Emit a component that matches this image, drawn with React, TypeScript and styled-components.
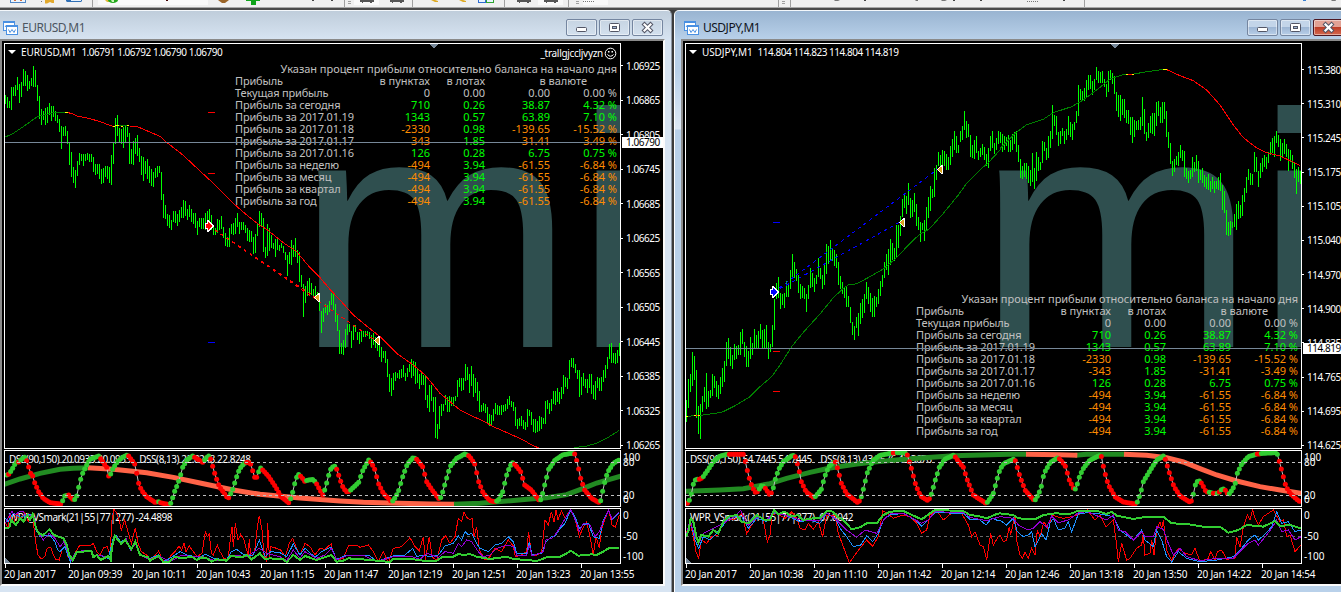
import React from "react";
import styled, { createGlobalStyle } from "styled-components";

// Drawing unit is a third of a pixel, so every pane maps 3 units to 1px
type Point = [number, number];
type Trend = "g" | "r";

const points = (text: string, dx = 0, dy = 0): Point[] =>
  text
    .trim()
    .split(/\s+/)
    .map((pair) => {
      const [x, y] = pair.split(",").map(Number);
      return [x + dx, y + dy] as Point;
    });

const toLine = (list: Point[]) => list.map((p) => p.join(",")).join(" ");

const parseBars = (text: string): Point[] =>
  text
    .trim()
    .split(/\s+/)
    .map((pair) => pair.split("-").map(Number) as Point);

const shiftBars = (list: Point[], dy: number): Point[] =>
  list.map(([high, low]) => [high + dy, low + dy]);

interface Dot {
  x: number;
  y: number;
  trend: Trend;
}

const parseDots = (text: string, dx = 0): Dot[] => {
  let trend: Trend = "g";
  return text
    .trim()
    .split(/\s+/)
    .map((item) => {
      const [x, y, t] = item.split(",");
      if (t) trend = t as Trend;
      return { x: Number(x) + dx, y: Number(y), trend };
    });
};

// one dot for every bar, between the given knots
const fillDots = (knots: Dot[]): Dot[] => {
  const dots: Dot[] = [];
  let k = 0;
  for (let x = knots[0].x; x <= 1860; x += 6) {
    while (k < knots.length - 2 && knots[k + 1].x <= x) k++;
    const a = knots[k];
    const b = knots[k + 1];
    const part = Math.min(1, (x - a.x) / (b.x - a.x));
    dots.push({ x, y: a.y + (b.y - a.y) * part, trend: part > 0.5 ? b.trend : a.trend });
  }
  return dots;
};

interface Stroke {
  color: string;
  line: Point[];
}

interface ChartData {
  symbol: string;
  quotes: string;
  expert?: string;
  scaleTop: number;
  tableTop: number;
  prices: string[];
  current: string;
  currentTop: number;
  priceLine: number;
  bars: Point[];
  average: Stroke[];
  dealColor: string;
  deals: [Point, Point][];
  stops: { x: number; y: number; color: string }[];
  dssLabel: string;
  dssSlow: Stroke[];
  dssFast: Dot[];
  wprLabel: string;
  wpr: Stroke[];
  times: string[];
}

const eurusd: ChartData = {
  symbol: "EURUSD,M1",
  quotes: "1.06791 1.06792 1.06790 1.06790",
  expert: "_trallgjccljvyzn",
  scaleTop: 16,
  tableTop: 19,
  prices: [
    "1.06925", "1.06865", "1.06805", "1.06745", "1.06685", "1.06625",
    "1.06565", "1.06505", "1.06445", "1.06385", "1.06325", "1.06265",
  ],
  current: "1.06790",
  currentTop: 94,
  priceLine: 426,
  bars: [
    ...parseBars(`
      285-312 290-322 303-325 262-330 262-288 255-288 230-270 252-308 245-290 207-258 212-258 225-272
      243-268 235-258 198-262 210-262 255-302 288-358 328-375 332-358 325-375 322-370 308-345 318-362
      318-350 332-362 345-368 357-395 378-447 380-408 378-408 392-432 430-495 457-532 502-550 510-563
      483-528 460-497 462-483 462-498 462-483 458-478 462-486 462-486 470-516 492-525 492-522 492-537
      508-552 504-548 498-532 498-537 500-548 465-554 430-492 354-432 345-407 385-430 386-430 380-443
      375-427 380-410 398-492 447-492 423-495 414-462 405-467 445-487 467-525 472-545 483-522 478-537
      498-548 506-556 515-560 504-534 498-530 498-518 515-598 582-655 615-657 642-678 645-684 660-690
      633-665 632-668 642-678 630-665 622-655 600-655 603-648 628-662 615-652 627-665 640-672 640-685
      662-704 654-680 653-685 654-688 640-690 632-690 627-680 645-690 675-704 684-704 657-700 660-690
      648-688 681-713 700-738 712-741 685-741 673-702 668-705 655-702 640-682 665-700 666-690 665-690
      675-698 685-725 690-725 693-725 710-760 702-760 670-708 633-680 640-682 655-756 740-774 672-768
      685-755 705-743 728-747 716-771 716-750 735-752 728-743 738-760 755-780 765-828 755-792 720-795
      735-771 714-771 750-790 755-845 825-860 852-951 858-910 842-886 833-878 850-885 867-890 857-888
      875-890 900-934 933-1000 925-967 912-938 915-945 902-935`),
    ...shiftBars(
      parseBars(`
      204-240 206-255 237-290 268-318 315-387 353-387 345-390 312-368 297-330 297-320 318-370 303-345
      300-322 320-345 320-357 318-352 318-335 318-336 318-332 320-340 330-370 323-360 335-368 345-378
      360-397 365-411 378-400 378-415 402-455 447-500 458-513 445-495 440-468 445-460 435-462 432-460
      420-455 444-468 428-455 417-442 402-458 408-452 410-477 432-475 447-492 437-480 450-480 452-525
      510-548 480-560 480-528 515-560 516-640 596-640 543-612 538-575 537-558 510-540 516-560 513-560
      516-542 516-542 513-528 465-516 460-487 458-497 460-497 417-468 427-465 447-503 423-482 447-516
      458-503 470-528 498-560 540-562 535-558 537-565 545-597 567-602 570-602 552-587 535-567 540-570
      543-570 540-570 540-562 537-558 522-552 513-540 528-545 532-560 545-602 582-612 580-605 573-602
      585-612 590-615 552-607 555-572 560-600 582-622 582-623 588-620 573-617 577-612 580-598 528-598
      524-550 535-567 522-558 497-537 497-540 488-530 500-535 485-520 450-507 455-485 460-492 405-462
      400-428 400-430 418-445 435-462 435-516 455-508 445-485 463-490 463-506 447-490 447-507 480-522
      468-524 455-487 460-500 455-498 435-470 420-458 395-430 357-402 354-413 383-413 385-417 375-413
      354-392`),
      675
    ),
  ],
  average: [
    { color: "#008000", line: points("16,411 40,400 70,380 112,350 160,338 196,338") },
    { color: "#ffff00", line: points("194,338 203,338") },
    { color: "#ff0000", line: points("203,338 214,340 232,348 270,356 300,365 338,379") },
    { color: "#ffff00", line: points("338,379 346,378 358,377") },
    { color: "#008000", line: points("358,377 388,377") },
    { color: "#ffff00", line: points("363,378 370,378") },
    { color: "#ffff00", line: points("381,377 388,377") },
    {
      color: "#ff0000",
      line: [
        ...points(
          "388,378 410,379 440,392 482,410 500,427 550,466 600,513 640,550 700,610 740,645 775,673 800,688 850,728 890,755 930,803 960,833"
        ),
        ...points(
          "0,193 40,236 70,270 100,295 150,335 200,385 250,420 285,450 310,480 330,505 360,530 390,555 430,575 460,588 490,605 540,627 580,645 605,660 627,669",
          990,
          675
        ),
      ],
    },
    { color: "#008000", line: points("732,668 770,663 800,655 830,640 868,616", 990, 675) },
  ],
  dealColor: "#ff0000",
  deals: [
    [[627, 678], [945, 891]],
    [[627, 678], [1125, 1020]],
  ],
  stops: [
    { x: 624, y: 336, color: "#ff0000" },
    { x: 624, y: 519, color: "#ff0000" },
    { x: 624, y: 1026, color: "#0000ff" },
  ],
  dssLabel: "DSS(90,150) 20.0933 20.0933    DSS(8,13) 22.8248 22.8248",
  dssSlow: [
    { color: "#228b22", line: points("10,134 60,117 120,100 180,88 220,85 268,83") },
    {
      color: "#ff6347",
      line: points(
        "264,83 340,88 440,98 520,112 600,129 700,150 780,163 900,174 1020,183 1090,187 1170,189 1290,192 1364,193"
      ),
    },
    {
      color: "#228b22",
      line: points("372,193 450,190 520,184 600,177 650,173 710,164 760,145 800,129 875,108", 990),
    },
  ],
  dssFast: [
    ...parseDots(`
      20,105,g 26,103,r 34,92,g 48,66 57,66,r 64,58,g 74,52,g 80,62,r 92,100 98,108 104,128 116,155 130,175
      150,188 182,192,r 188,182,g 194,168 206,165,r 220,180 226,178,g 232,163 236,142 242,118 248,100
      258,78 270,58 296,48,g 302,56,r 320,82 326,108 332,102,g 338,88 350,68 364,54 380,46 386,48,r 404,72
      410,100 416,130 424,150 440,170 466,188 474,184,g 480,188,r 508,194 514,188,g 522,158 532,135
      540,112 548,82 560,60 578,48 584,52,r 610,68 616,56,g 626,48 634,60,r 640,88 650,118 658,140
      684,176,r 688,170,g 698,148 710,110 718,88 730,72 742,66,r 752,72 764,112 770,112 778,90,g 782,84
      790,92,r 805,108 825,138 845,172 866,188 872,176,g 880,150 886,122 894,102 904,110,r 914,124
      924,120,g 940,118 950,132,r 968,165 974,150,g 982,122 990,90`),
    ...parseDots(
      `
      12,76,g 20,88,r 32,124 40,145 52,157 60,152,g 86,127 98,92 116,60 124,68,r 134,88 146,132 160,160
      185,185 190,182,g 205,155 218,110 232,72 250,52 260,58,r 278,80 290,125 310,155 328,178 334,170,g
      346,128 360,80 380,55 404,42 418,48,r 434,72 446,125 460,160 480,182 495,185 504,182,g 518,155
      530,105 540,78 548,68 556,74,r 572,95 584,135 604,150 628,182 634,178,g 644,135 656,88 675,60
      700,44 725,40 734,42,r 742,68 752,115 764,150 785,175 808,188 812,182,g 822,135 832,98 850,70 870,58`,
      990
    ),
  ],
  wprLabel: "WPR_VSmark(21|55|77|277) -24.4898",
  wpr: [
    {
      color: "#ff0000",
      line: [
        ...points(`
          16,250 24,262 30,225 40,250 50,222 60,240 75,218 85,245 98,225 106,300 114,345 124,357 134,350
          142,325 152,322 158,340 166,357 178,360 186,330 196,318 204,350 214,362 226,338 240,315 270,318
          280,310 290,335 300,345 312,322 322,320 330,345 336,240 342,208 350,220 356,235 364,270 374,240
          384,275 394,310 406,263 414,310 424,335 440,345 450,358 462,350 476,333 488,362 500,365 510,350
          525,335 537,318 545,330 552,310 558,335 568,318 580,335 592,350 606,340 616,275 622,290 628,282
          634,340 640,345 652,315 660,335 672,355 684,360 692,290 696,260 700,320 706,250 714,300 722,283
          732,300 744,345 748,297 752,350 764,335 772,260 778,227 786,270 792,345 800,365 803,250 808,350
          812,320 830,325 842,330 856,350 868,310 878,295 888,320 900,345 915,310 930,320 945,345 960,325
          975,328 995,310`),
        ...points(
          `4,320 20,360 40,355 55,318 80,315 90,322 115,315 130,335 145,365 160,335 175,368 190,325 215,320
          240,293 255,320 268,332 280,290 286,360 298,290 306,350 320,362 335,300 347,288 360,310 375,290
          385,235 395,245 402,215 410,232 420,240 426,235 432,290 440,260 448,330 466,360 480,350 495,325
          515,335 535,300 550,318 556,350 575,345 590,335 596,275 604,345 620,345 635,338 645,240 655,255
          664,215 672,245 678,210 684,240 694,213 705,235 722,208 735,235 748,290 758,265 770,245 780,290
          790,345 798,290 808,325 814,270 824,240 836,208 846,255 856,262 868,225`,
          990
        ),
      ],
    },
    {
      color: "#1e90ff",
      line: [
        ...points(`
          16,235 24,245 40,220 60,232 80,222 100,225 108,270 120,290 134,285 150,285 165,305 172,328
          180,335 195,320 205,350 212,366 228,335 270,332 285,348 300,345 325,355 338,300 348,285 362,305
          378,298 392,330 408,308 420,345 450,355 475,345 490,365 515,352 540,335 560,345 600,352 616,342
          640,355 680,360 694,335 710,328 740,350 760,345 770,320 778,300 786,325 796,350 812,335 840,338
          860,350 880,312 900,345 915,325 945,352 965,335 985,325`),
        ...points(
          `4,322 20,358 50,345 120,348 140,365 190,348 225,345 248,325 260,350 280,345 300,350 325,345
          345,318 370,310 385,288 395,300 405,275 415,285 425,280 440,310 450,325 475,335 495,315 515,310
          535,290 550,305 560,340 590,340 598,305 606,345 635,340 648,305 665,290 675,288 690,265 705,250
          722,210 735,230 748,265 760,255 775,250 790,290 808,295 820,240 836,210 846,240 868,218`,
          990
        ),
      ],
    },
    {
      color: "#9400d3",
      line: [
        ...points(`
          16,250 26,230 36,215 45,225 58,215 70,215 80,230 100,222 112,275 130,300 148,280 165,295 180,320
          192,305 206,345 214,360 228,335 270,330 280,350 295,345 330,352 345,285 365,310 378,295 392,330
          408,308 420,345 450,360 480,350 510,365 545,345 575,350 610,350 640,360 680,362 694,345 740,350
          778,325 800,340 840,350 860,362 880,330 900,355 915,335 950,355 975,345`),
        ...points(
          `4,325 20,360 55,345 100,345 140,365 190,350 240,348 270,358 290,340 325,352 345,335 370,340
          385,310 395,320 410,300 425,305 445,335 460,350 480,345 500,325 530,315 550,320 560,345 590,345
          598,315 606,348 640,335 648,300 665,295 675,285 690,262 722,208 740,250 748,275 760,250 780,255
          795,290 808,275 820,245 836,210 846,238 868,215`,
          990
        ),
      ],
    },
    {
      color: "#32cd32",
      line: [
        ...points(`
          16,265 28,262 34,240 48,255 60,235 70,245 82,225 90,240 98,222 108,265 118,282 130,285 148,268
          162,285 190,295 200,315 208,345 218,360 230,337 274,332 280,352 290,345 302,360 325,348 332,360
          336,320 345,287 354,300 364,312 376,300 394,328 406,305 420,345 444,352 450,362 476,348 490,366
          508,365 525,350 545,355 575,350 590,360 605,352 620,355 635,365 650,358 680,362 694,348 725,352
          740,345 755,358 780,340 795,358 810,355 850,358 860,366 880,345 900,360 915,348 950,360`),
        ...points(
          `4,345 20,365 40,362 55,355 120,360 180,366 190,357 250,358 280,362 320,362 335,352 370,350
          385,342 400,345 420,342 440,350 480,357 530,350 550,357 590,360 620,363 650,352 690,350 710,340
          722,332 745,347 785,343 800,345 820,335 836,325 868,323`,
          990
        ),
      ],
    },
  ],
  times: [
    "20 Jan 2017", "20 Jan 09:39", "20 Jan 10:11", "20 Jan 10:43", "20 Jan 11:15",
    "20 Jan 11:47", "20 Jan 12:19", "20 Jan 12:51", "20 Jan 13:23", "20 Jan 13:55",
  ],
};

const usdjpy: ChartData = {
  symbol: "USDJPY,M1",
  quotes: "114.804 114.823 114.804 114.819",
  scaleTop: 20,
  tableTop: 249,
  prices: [
    "115.380", "115.310", "115.245", "115.175", "115.105", "115.040",
    "114.970", "114.900", "114.835", "114.765", "114.695", "114.625",
  ],
  current: "114.819",
  currentTop: 300,
  priceLine: 1044,
  bars: [
    ...shiftBars(
      parseBars(`
      525-590 462-550 447-500 381-483 393-465 435-578 542-627 537-641 513-560 486-532 444-551 497-545
      495-518 447-513 453-490 468-515 480-521 456-506 429-486 408-470 351-422 339-402 366-422 390-432
      357-405 363-402 360-390 321-390 312-357 351-395 363-426 378-425 336-402 354-390 312-368 330-368
      318-368 297-342 315-368 312-370 300-371 351-402 357-380 300-366 222-315 174-222 156-218 204-252
      207-240 204-248 168-216 174-216 135-192 87-158 111-160 132-168 150-204 177-222 183-218 189-222
      207-261 180-222 129-189 144-186 159-200 150-176 99-156 129-162 150-192 117-180 57-148 63-116
      45-104 69-108 75-122 87-130 111-180 153-192 171-207 186-218 186-246 213-246 246-294 291-330
      303-345 276-308 264-333 234-296 222-278 207-264 171-222 186-236 204-260 219-276 213-276 216-246
      192-236 168-212 150-185 111-158 87-136 72-150 42-120 54-104 69-108`),
      675
    ),
    ...parseBars(`
      675-771 675-745 648-708 597-650 582-624 588-642 549-615 594-655 600-650 579-636 612-678 651-690
      666-725 669-690 660-722 621-690 591-655 558-632 567-594 504-590 495-540 456-498 465-510 450-500
      453-498 462-510 471-510 438-495 417-470 393-450 408-459 435-458 393-426 378-420 333-390 363-413
      372-410 405-471 435-473 420-476 408-458 453-480 444-471 432-465 441-480 462-498 444-503 408-452
      393-444 429-462 414-450 393-432 396-430 402-455 408-450 411-438 405-455 420-456 402-450 396-432
      393-457 435-486 477-533 498-536 489-530 489-536 498-548 510-557 459-545 504-567 456-542 471-512
      486-510 423-488 426-454 444-480 408-473 393-444 315-416 345-378 348-405 396-437 393-432 384-407
      393-432 387-420 348-405 366-410 372-420 366-390 333-370 255-348 267-300 273-300 264-303 240-290
      225-270 225-267 243-285 237-270 201-240 213-250 216-250 213-250 237-262 252-291 212-276 210-240
      219-252 228-282 276-333 285-350 285-363 297-345 297-353 330-370 330-372 351-405 351-430 360-412
      363-390 360-390 351-390 291-378 327-402 396-423 369-413 348-400 339-402 339-408 306-378 303-348
      321-370 306-368 306-356 333-412 396-444 429-493 483-528 477-517 468-495 456-498 435-473 450-483
      453-530 504-538 513-549 510-538 471-531 486-516 465-512 483-549 510-540 504-550 525-560 531-568
      522-570 543-576 531-568 543-578 543-568 531-570 519-572 555-630 573-640 630-705 666-707 662-705
      665-684 642-680 612-690 603-657 615-655 585-648 564-606 531-578 507-540 519-555 522-555 456-516
      471-516 513-560 489-535 474-516 465-500 471-508 456-490 426-465 414-460 408-470 393-430 405-440
      417-483 429-471 417-462 432-470 447-512 450-486 465-508 490-534 507-582 501-545 513-552`),
  ],
  average: [
    {
      color: "#008000",
      line: [
        ...points(
          "47,576 75,571 91,571 155,562 190,545 240,515 270,485 305,455 330,420 365,365 400,322 450,267 490,218 520,190 535,180 560,176 600,155 640,132 680,98 720,55 750,27",
          -33,
          675
        ),
        ...points("778,687 820,640 865,585 890,550 935,505 955,488 990,450", -33),
        ...points(
          "0,445 45,400 80,374 130,358 160,338 215,320 250,300 300,262 330,237 370,224 402,222 430,217 490,208",
          957
        ),
      ],
    },
    { color: "#ffff00", line: points("47,576 53,574", -33, 675) },
    { color: "#ffff00", line: points("73,571 91,571", -33, 675) },
    { color: "#ff0000", line: points("79,571 85,571", -33, 675) },
    { color: "#ffff00", line: points("378,223 403,223", 957) },
    { color: "#ff0000", line: points("384,223 396,223", 957) },
    { color: "#ffff00", line: points("490,208 500,208", 957) },
    {
      color: "#ff0000",
      line: points(
        "500,209 540,227 580,242 620,270 660,315 700,375 730,413 770,444 800,458 840,468 870,482 900,497",
        957
      ),
    },
  ],
  dealColor: "#0000ff",
  deals: [
    [[279, 876], [657, 666]],
    [[279, 876], [771, 507]],
  ],
  stops: [
    { x: 276, y: 666, color: "#0000ff" },
    { x: 276, y: 1053, color: "#ff0000" },
    { x: 276, y: 1173, color: "#ff0000" },
  ],
  dssLabel: "DSS(90,150) 54.7445 54.7445    DSS(8,13) 43.3676 43.3676",
  dssSlow: [
    {
      color: "#228b22",
      line: [
        ...points(
          "43,154 150,150 220,146 300,131 350,115 420,97 480,84 560,72 620,65 720,56 850,47 1018,43",
          -33
        ),
        ...points("80,43", 957),
      ],
    },
    { color: "#228b22", line: points("225,46 260,43 376,43", 957) },
    { color: "#ff6347", line: points("78,43 180,44 232,46", 957) },
    {
      color: "#ff6347",
      line: points("372,43 440,46 500,53 550,66 600,86 650,105 710,123 780,140 840,150 910,161", 957),
    },
  ],
  dssFast: [
    ...parseDots(
      `
      52,190,r 60,178,g 66,155 72,122 80,118 90,118,r 98,112,g 112,92 130,65 150,48 170,43,g 180,43,r
      222,43,r 228,75,r 236,108 246,140 258,160,r 266,150,g 276,135 286,145,r 300,166 308,152,g 316,118
      326,88 340,65 368,45,g 376,50,r 386,85 394,125 408,155 432,173,r 438,168,g 454,148 464,110 476,80
      492,66,g 497,66,r 504,90 514,130 530,162 564,188,r 572,178,g 582,140 592,98 608,62 630,46 662,40,g
      670,39,r 682,38,g 704,38,g 712,45,r 724,85 738,138 752,168 774,182,r 782,170,g 796,120 808,82
      824,58 852,45,g 858,54,r 880,82 892,120 910,165 948,190,r 954,185,g 970,160 982,115 990,88`,
      -33
    ),
    ...parseDots(
      `
      12,70,g 40,58,g 46,62,r 60,110 75,150 103,182,r 108,177,g 122,148 132,100 150,68 172,54,g 178,56,r
      195,75 208,120 222,148,r 228,146,g 240,105 252,82 270,60 300,46,g 305,50,r 312,90 325,135 345,170
      370,186 405,192,r 412,186,g 422,158 430,125 450,92 470,60 490,48,g 496,58,r 508,98 522,140 540,168
      572,188,r 578,172,g 588,126 600,122,g 606,132,r 618,155 630,157,g 642,160,r 652,160,g 660,155,r
      667,145,g 678,152,r 684,164,r 690,160,g 705,135 712,100 725,72 745,50 768,43,g 772,42,r 778,42,r
      786,40,g 830,38,g 834,48,r 846,95 858,140 872,162 905,190`,
      957
    ),
  ],
  wprLabel: "WPR_VSmark(21|55|77|277) -67.8042",
  wpr: [
    {
      color: "#ff0000",
      line: [
        ...points(
          `49,280 60,245 70,290 78,335 86,355 94,300 110,310 125,290 145,285 165,235 185,240 200,235 215,220
          230,282 245,255 260,235 280,240 292,305 300,285 306,225 320,220 345,235 365,215 380,235 390,265
          405,270 415,250 430,268 445,245 458,290 470,225 495,225 505,280 520,320 538,368 555,345 570,325
          590,300 608,318 625,290 638,212 650,218 670,235 700,225 720,230 740,250 755,280 770,270 780,225
          800,212 820,240 850,215 875,220 895,255 905,290 915,275 930,315 940,320 950,360 962,280 970,315
          985,290`,
          -33
        ),
        ...points(
          `0,285 10,305 20,300 28,260 32,285 45,225 50,300 60,345 68,355 75,335 85,355 95,325 105,345 112,270
          120,290 132,245 145,270 155,225 170,230 190,235 215,230 240,222 262,210 285,240 300,225 318,260
          340,240 348,300 355,365 365,310 380,360 390,355 400,340 410,325 425,315 430,280 434,345 450,340
          455,300 462,345 470,270 480,245 485,265 490,240 500,330 515,360 535,325 555,340 575,345 585,325
          600,365 625,355 632,335 645,360 652,335 665,330 680,358 705,355 710,290 720,320 730,260 742,225
          750,240 758,208 765,235 775,255 790,230 820,210 840,245 850,240 860,290 870,285 885,335 903,315`,
          957
        ),
      ],
    },
    {
      color: "#1e90ff",
      line: [
        ...points(
          `49,290 60,240 75,300 86,325 100,290 120,300 140,280 160,255 180,230 215,230 235,265 260,235
          290,245 310,220 345,225 390,245 420,240 450,250 470,220 495,235 510,265 530,290 550,320 572,315
          590,288 608,305 625,280 640,240 660,225 700,220 735,240 755,258 775,240 795,218 880,220 900,238
          930,240 948,255 965,235 985,242`,
          -33
        ),
        ...points(
          `0,240 20,255 40,235 52,275 70,290 85,285 95,275 105,320 115,300 125,280 138,300 150,250 160,235
          175,270 195,265 205,245 215,275 235,222 262,218 300,222 340,230 360,270 400,300 425,270 435,300
          460,320 470,270 485,300 500,350 515,366 535,335 560,355 600,365 650,360 700,350 725,325 745,300
          765,285 775,300 800,278 815,260 830,215 845,250 865,245 885,275 903,270`,
          957
        ),
      ],
    },
    {
      color: "#9400d3",
      line: [
        ...points(
          `49,285 60,240 75,290 86,310 100,280 130,265 160,250 190,232 212,212 235,255 260,230 290,240
          310,218 345,225 390,240 450,240 470,218 500,240 530,270 560,292 585,270 620,280 640,240 660,222
          700,220 755,250 775,240 795,215 880,218 900,232 950,242`,
          -33
        ),
        ...points(
          `0,230 40,235 55,255 85,270 100,265 120,245 140,262 155,228 175,248 205,240 235,218 262,215
          320,240 340,225 355,270 375,275 400,300 425,275 435,290 460,290 470,260 490,268 505,310 520,345
          540,325 560,350 600,362 650,355 700,355 725,330 745,310 765,300 775,315 800,285 815,265 830,240
          845,275 865,270 885,300 903,290`,
          957
        ),
      ],
    },
    {
      color: "#32cd32",
      line: [
        ...points(
          `49,290 56,270 62,235 70,245 78,285 85,308 94,285 115,290 130,270 145,280 160,245 175,230 200,225
          215,245 235,250 260,225 285,240 300,240 312,210 325,222 345,215 365,230 385,225 400,240 430,235
          450,235 470,213 490,215 500,228 520,240 545,268 570,262 590,250 620,250 640,225 660,215 700,213
          720,222 755,238 780,220 795,210 880,213 900,225 925,228 950,235 980,222`,
          -33
        ),
        ...points(
          `0,220 40,225 55,235 105,238 130,225 165,220 210,222 235,212 290,212 320,222 335,215 350,227
          400,237 440,230 490,230 515,250 560,252 610,260 660,260 685,278 715,270 740,255 790,260 825,243
          840,258 870,255 903,265`,
          957
        ),
      ],
    },
  ],
  times: [
    "20 Jan 2017", "20 Jan 10:38", "20 Jan 11:10", "20 Jan 11:42", "20 Jan 12:14",
    "20 Jan 12:46", "20 Jan 13:18", "20 Jan 13:50", "20 Jan 14:22", "20 Jan 14:54",
  ],
};

const profitRows = [
  ["Текущая прибыль", "0", "0.00", "0.00", "0.00 %"],
  ["Прибыль за сегодня", "710", "0.26", "38.87", "4.32 %"],
  ["Прибыль за 2017.01.19", "1343", "0.57", "63.89", "7.10 %"],
  ["Прибыль за 2017.01.18", "-2330", "0.98", "-139.65", "-15.52 %"],
  ["Прибыль за 2017.01.17", "-343", "1.85", "-31.41", "-3.49 %"],
  ["Прибыль за 2017.01.16", "126", "0.28", "6.75", "0.75 %"],
  ["Прибыль за неделю", "-494", "3.94", "-61.55", "-6.84 %"],
  ["Прибыль за месяц", "-494", "3.94", "-61.55", "-6.84 %"],
  ["Прибыль за квартал", "-494", "3.94", "-61.55", "-6.84 %"],
  ["Прибыль за год", "-494", "3.94", "-61.55", "-6.84 %"],
];

const valueColor = (value: string) => {
  const amount = parseFloat(value);
  if (amount === 0) return "#c0c0c0";
  return amount > 0 ? "#00ff00" : "#ff8c00";
};

type ToolKind =
  | "sep" | "grip" | "doc" | "star" | "panel" | "ball" | "brown" | "plus" | "dot"
  | "chart" | "gold" | "tiles" | "mark" | "dots" | "blue";

// x, width, kind, pressed
const tools: [number, number, ToolKind, boolean?][] = [
  [10, 16, "doc"], [41, 1, "dots"], [45, 9, "star"], [66, 16, "panel"], [92, 1, "sep"],
  [98, 110, "ball", true], [218, 11, "brown"], [246, 14, "plus"], [312, 2, "dot"], [331, 2, "dot"],
  [344, 1, "sep"], [348, 3, "grip"], [354, 25, "chart", true], [384, 25, "chart"], [412, 1, "sep"],
  [431, 7, "gold"], [459, 7, "gold"], [478, 16, "tiles"], [504, 1, "sep"], [511, 25, "chart"],
  [538, 25, "chart", true], [568, 1, "sep"], [576, 3, "grip"], [583, 25, "dots", true], [778, 1, "sep"],
  [782, 3, "grip"], [790, 1, "sep"], [834, 7, "mark"], [864, 2, "dot"], [915, 3, "mark"],
  [941, 7, "mark"], [953, 3, "dot"], [980, 3, "dot"], [1027, 11, "dots"], [1063, 3, "dot"],
  [1084, 1, "sep"], [1303, 3, "blue"], [1331, 5, "mark"],
];

const ToolGlyph = ({ kind }: { kind: ToolKind }) => {
  switch (kind) {
    case "sep":
      return <path d="M0 0h1v7h-1z" fill="#a0a0a0" />;
    case "grip":
      return <path d="M0 1h3v1h-3zM0 3h3v1h-3z" fill="#a0a0a0" />;
    case "doc":
      return (
        <>
          <path d="M0 0h16v3h-16z" fill="#4f86c6" />
          <path d="M1 0h14v2h-14z" fill="#eef5fc" />
          <path d="M4 0h2v1h-2zM10 0h2v1h-2z" fill="#d07040" />
        </>
      );
    case "star":
      return <path d="M0 0h9v3h-2l-2 -1l-3 1.500h-2z" fill="#e2a92d" />;
    case "panel":
      return (
        <>
          <path d="M0 0h16v1l-1 1h-14l-1 -1z" fill="#2f6fb5" />
          <path d="M5 0h10v1h-10z" fill="#e7f1fb" />
        </>
      );
    case "ball":
      return (
        <>
          <path d="M7 0h5v2h-3z" fill="#e4b83a" />
          <path d="M10 0h10a5 3 0 0 1 -10 0z" fill="#22a81c" />
          <path d="M13 0h3v2h-2z" fill="#c8f3b5" />
          <path d="M68 0h2v1h-2z" fill="#400" />
        </>
      );
    case "brown":
      return <path d="M0 0h11l-4 3h-3z" fill="#9a6428" />;
    case "plus":
      return <path d="M0 0h14v1h-4v4h-5v-4h-5z" fill="#0fa31a" />;
    case "dot":
      return <path d="M0 0h2v1h-2z" fill="#444" />;
    case "chart":
      return <path d="M6 0h14v2h-2v1h-2v-1h-7v1h-1v-1h-2z" fill="#555" />;
    case "gold":
      return <path d="M0 0h4l3 1v1h-3z" fill="#dfaa22" />;
    case "tiles":
      return (
        <>
          <path d="M0 0h8v3h-8z" fill="#2d6bd0" />
          <path d="M8 0h8v3h-8z" fill="#2fa52f" />
          <path d="M1 0h6v2h-6zM9 0h6v2h-6z" fill="#e9f4ff" />
        </>
      );
    case "mark":
      return <path d="M0 0h6l-2 1h-3z" fill="#777" />;
    case "dots":
      return <path d="M0 1h1v1h-1zM2 1h1v1h-1zM4 1h1v1h-1zM6 1h1v1h-1zM8 1h1v1h-1zM10 1h1v1h-1z" fill="#777" />;
    case "blue":
      return <path d="M0 0h3v1h-3z" fill="#3a7fd0" />;
  }
};

const Toolbar = () => (
  <ToolRow>
    {tools.map(([x, width, kind, pressed], i) => {
      const before = i ? tools[i - 1][0] + tools[i - 1][1] : 0;
      return (
        <Tool key={x} $gap={x - before} $width={width} $pressed={pressed}>
          <svg width={width} height="7">
            <ToolGlyph kind={kind} />
          </svg>
        </Tool>
      );
    })}
  </ToolRow>
);

const ProfitTable = ({ top }: { top: number }) => (
  <Profit $top={top}>
    <ProfitTitle>Указан процент прибыли относительно баланса на начало дня</ProfitTitle>
    <ProfitName>Прибыль</ProfitName>
    <ProfitCell>в пунктах</ProfitCell>
    <ProfitCell>в лотах</ProfitCell>
    <ProfitCurrency>в валюте</ProfitCurrency>
    {profitRows.map(([name, ...values]) => (
      <React.Fragment key={name}>
        <ProfitName>{name}</ProfitName>
        {values.map((value, i) => (
          <ProfitCell key={i} $color={valueColor(value)}>
            {value}
          </ProfitCell>
        ))}
      </React.Fragment>
    ))}
  </Profit>
);

const Strokes = ({ list, width }: { list: Stroke[]; width: (color: string) => number }) => (
  <>
    {list.map(({ color, line }, i) => (
      <polyline key={i} points={toLine(line)} fill="none" stroke={color} strokeWidth={width(color)} />
    ))}
  </>
);

const PriceDrawing = ({ data }: { data: ChartData }) => (
  <Drawing viewBox="15 132 1845 1212" shapeRendering="crispEdges">
    {data.bars.map(([high, low], i) => (
      <rect
        key={i}
        x={15 + i * 6}
        y={Math.round(high / 3) * 3}
        width={3}
        height={Math.round((low - high) / 3) * 3}
        fill="#00ff00"
      />
    ))}
    <Strokes list={data.average} width={() => 3} />
    {data.stops.map((stop) => (
      <rect key={stop.y} x={stop.x} y={stop.y} width={21} height={3} fill={stop.color} />
    ))}
    {data.deals.map(([from, to], i) => (
      <line
        key={i}
        x1={from[0]}
        y1={from[1]}
        x2={to[0]}
        y2={to[1]}
        stroke={data.dealColor}
        strokeWidth={3}
        strokeDasharray="10 11"
      />
    ))}
    {data.deals.map(([, [x, y]]) => (
      <g key={x}>
        <path d={`M${x - 3} ${y + 1.5}l13 -13.500h5v27h-5z`} fill="#fff" />
        <path d={`M${x} ${y + 1.5}l9 -9h3v18h-3z`} fill="#daa520" />
      </g>
    ))}
    <g transform={`translate(${data.deals[0][0][0]} ${data.deals[0][0][1]})`}>
      <path d="M-12 -9h6v-8h6l14 14v6l-14 14h-6v-8h-6z" fill="#fff" />
      <path d="M-8 -6h6v-6l12 12l-12 12v-6h-6z" fill={data.dealColor} />
    </g>
    <rect x={15} y={data.priceLine} width={1845} height={3} fill="#778899" />
    <path d="M1287 132h27l-13 14z" fill="#778899" />
  </Drawing>
);

const DssDrawing = ({ data }: { data: ChartData }) => {
  const dots = fillDots(data.dssFast);
  return (
    <Drawing viewBox="15 33 1845 165">
      <Strokes list={data.dssSlow} width={() => 15} />
      <polyline points={dots.map((d) => `${d.x},${d.y}`).join(" ")} fill="none" stroke="#c0c0c0" strokeWidth={3} />
      {dots.map((d) => (
        <circle key={d.x} cx={d.x} cy={d.y} r={7.5} fill={d.trend === "g" ? "#32cd32" : "#ff0000"} />
      ))}
      <path d="M15 67.500H1860M15 166.500H1860" stroke="#c0c0c0" strokeWidth={3} strokeDasharray="9 9" />
    </Drawing>
  );
};

const WprDrawing = ({ data }: { data: ChartData }) => (
  <Drawing viewBox="15 207 1845 162" shapeRendering="crispEdges">
    <path d="M15 289.500H1860" stroke="#696969" strokeWidth={3} strokeDasharray="9 9" />
    <Strokes list={data.wpr} width={(color) => (color === "#32cd32" ? 6 : 3)} />
    <path d="M15 352l17 17h-17z" fill="#778899" />
  </Drawing>
);

const Chart = ({ data }: { data: ChartData }) => (
  <Client>
    <Pane>
      <Drawing viewBox="15 132 1845 1212">
        <Watermark x={888} y={1041}>
          mi
        </Watermark>
      </Drawing>
      <ProfitTable top={data.tableTop} />
      <PriceDrawing data={data} />
      <PaneHeader>
        <svg width="8" height="4">
          <path d="M0 0h8l-4 4z" fill="#fff" />
        </svg>
        <span>{data.symbol}</span>
        <Quotes>{data.quotes}</Quotes>
      </PaneHeader>
      {data.expert && (
        <Expert>
          {data.expert}
          <svg width="13" height="13" viewBox="0 0 13 13" fill="none" stroke="#fff">
            <circle cx="6.5" cy="6.5" r="5.3" />
            <path d="M3.500 7.500q3 3.500 6 0" />
            <path d="M4 4h1.500v1.500h-1.500zM7.500 4h1.500v1.500h-1.500z" fill="#fff" stroke="none" />
          </svg>
        </Expert>
      )}
    </Pane>
    <PriceScale $top={data.scaleTop}>
      {data.prices.map((price) => (
        <Price key={price}>{price}</Price>
      ))}
      <CurrentPrice $top={data.currentTop}>{data.current}</CurrentPrice>
    </PriceScale>
    <Pane>
      <PaneLabel>{data.dssLabel}</PaneLabel>
      <DssDrawing data={data} />
    </Pane>
    <LevelScale>
      <Level $top={1}>100</Level>
      <Level $top={6}>80</Level>
      <Level $top={39}>20</Level>
      <Level $top={43}>0</Level>
    </LevelScale>
    <Pane>
      <PaneLabel>{data.wprLabel}</PaneLabel>
      <WprDrawing data={data} />
    </Pane>
    <LevelScale>
      <Level $top={1}>0</Level>
      <Level $top={22}>-50</Level>
      <Level $top={42}>-100</Level>
    </LevelScale>
    <TimeScale>
      {data.times.map((time) => (
        <Time key={time}>{time}</Time>
      ))}
    </TimeScale>
  </Client>
);

const ChartWindow = ({ data, active }: { data: ChartData; active?: boolean }) => (
  <Window $active={active}>
    <TitleBar $active={active}>
      <svg width="15" height="14" viewBox="0 0 15 14" fill="#fff" stroke="#4a90e2">
        <rect x="0.5" y="0.5" width="11" height="9" />
        <path d="M0 1.500h12" />
        <path d="M2 6l1.500 -2l1.500 3" />
        <rect x="3.500" y="4.500" width="11" height="9" />
        <path d="M3 5.500h12" />
        <path d="M5.500 8.500l1.500 3l2 -3l2 3l1.500 -3" fill="none" />
      </svg>
      <TitleText $active={active}>{data.symbol}</TitleText>
      <TitleButton $active={active}>
        <svg width="29" height="15">
          <rect x="9.500" y="7.500" width="10" height="4" rx="1" fill="#fff" stroke="#535666" />
        </svg>
      </TitleButton>
      <TitleButton $active={active}>
        <svg width="29" height="15">
          <rect x="9.500" y="3.500" width="10" height="8" rx="1" fill="#fff" stroke="#535666" />
          <rect x="12.500" y="6.500" width="4" height="2" fill="#9fb5d3" stroke="#535666" />
        </svg>
      </TitleButton>
      <TitleButton $active={active} $close>
        <svg width="29" height="15">
          <path d="M11.500 4.500l6 6M17.500 4.500l-6 6" stroke="#535666" strokeWidth="4.200" strokeLinecap="square" />
          <path d="M11.500 4.500l6 6M17.500 4.500l-6 6" stroke="#fff" strokeWidth="2.200" strokeLinecap="square" />
        </svg>
      </TitleButton>
    </TitleBar>
    <Chart data={data} />
  </Window>
);

export default function App() {
  return (
    <>
      <GlobalStyle />
      <Terminal>
        <Toolbar />
        <Desktop>
          <ChartWindow data={eurusd} />
          <ChartWindow data={usdjpy} active />
        </Desktop>
      </Terminal>
    </>
  );
}

const GlobalStyle = createGlobalStyle`
  * {
    box-sizing: border-box;
  }
  body {
    margin: 0;
    background: #3c3c3c;
    overflow: hidden;
  }
  svg {
    display: block;
    flex: none;
  }
`;

const Terminal = styled.div`
  display: flex;
  flex-direction: column;
  width: 1341px;
  height: 592px;
  overflow: hidden;
  font-family: "Noto Sans", sans-serif;
  font-size: 10px;
  white-space: pre;
`;
const ToolRow = styled.div`
  display: flex;
  flex: none;
  height: 10px;
  background: #f0f0f0;
  border-bottom: 2px solid #4b4b4b;
  box-shadow: inset 0 -1px 0 #a8a8a8;
`;
const Tool = styled.div<{ $gap: number; $width: number; $pressed?: boolean }>`
  flex: none;
  width: ${(p) => p.$width}px;
  height: ${(p) => (p.$pressed ? 5 : 7)}px;
  margin-left: ${(p) => p.$gap}px;
  background: ${(p) => (p.$pressed ? "#fafafa" : "none")};
`;
const Desktop = styled.div`
  display: flex;
  gap: 2px;
  height: 582px;
`;
const Window = styled.div<{ $active?: boolean }>`
  flex: none;
  width: ${(p) => (p.$active ? 679 : 672)}px;
  padding-left: ${(p) => (p.$active ? 6 : 0)}px;
  border-top: 1px solid #f4f8fc;
  border-left: ${(p) => (p.$active ? "1px solid #fff" : "none")};
  border-right: 1px solid #8c96a3;
  border-radius: ${(p) => (p.$active ? "5px 0 0 0" : "0 5px 0 0")};
  background: ${(p) =>
    p.$active
      ? "linear-gradient(#99b4d1, #b9d1ea 29px, #b9d1ea 60px, #dfeaf6 118px, #b9d1ea 119px)"
      : "linear-gradient(#bfcddb, #d7e4f2 29px)"};
`;
const TitleBar = styled.div<{ $active?: boolean }>`
  display: flex;
  align-items: center;
  gap: 2px;
  height: 28px;
  width: 663px;
  padding: 5px 0 0 3px;
`;
const TitleText = styled.div<{ $active?: boolean }>`
  flex: 1;
  padding-left: 2px;
  font-size: 12px;
  letter-spacing: -0.5px;
  color: ${(p) => (p.$active ? "#10141c" : "#4c5661")};
`;
const TitleButton = styled.div<{ $active?: boolean; $close?: boolean }>`
  width: 31px;
  height: 17px;
  border: 1px solid ${(p) => (p.$active && p.$close ? "#4d1822" : "#7586a0")};
  border-radius: 2px;
  box-shadow: inset 0 0 0 1px rgba(255, 255, 255, 0.45);
  background: ${(p) =>
    !p.$active
      ? "none"
      : p.$close
      ? "linear-gradient(#e2a194 45%, #bd3d27 50%, #d4694f)"
      : "linear-gradient(#c3d5e9 45%, #9db6d4 50%, #b9cfe8)"};
`;
const Client = styled.div`
  display: grid;
  grid-template-columns: 617px 1fr;
  grid-template-rows: 406px 57px 56px 20px;
  row-gap: 1px;
  width: 665px;
  height: 547px;
  padding: 2px 0 0 2px;
  border: 2px solid;
  border-color: #8a8a8a #fbfbfb #fbfbfb #8a8a8a;
  background: #000;
  color: #fff;
`;
const Pane = styled.div`
  position: relative;
  overflow: hidden;
  border: 1px solid #fff;
`;
const Drawing = styled.svg`
  position: absolute;
  inset: 0;
  width: 100%;
  height: 100%;
`;
const Watermark = styled.text`
  font-family: "Liberation Sans", sans-serif;
  font-size: 1002px;
  fill: #2f4f4f;
`;
const PaneHeader = styled.div`
  position: absolute;
  top: 1px;
  left: 3px;
  display: flex;
  align-items: center;
  gap: 5px;
  line-height: 14px;
  letter-spacing: -0.1px;
`;
const Quotes = styled.span`
  letter-spacing: -0.48px;
`;
const Expert = styled.div`
  position: absolute;
  top: 2px;
  right: 3px;
  display: flex;
  align-items: center;
  gap: 1px;
  line-height: 14px;
  letter-spacing: -0.3px;
`;
const PaneLabel = styled.div`
  position: absolute;
  top: 1px;
  left: 4px;
  line-height: 14px;
  letter-spacing: -0.48px;
`;
const Profit = styled.div<{ $top: number }>`
  position: absolute;
  top: ${(p) => p.$top}px;
  left: 230px;
  display: grid;
  grid-template-columns: 130px 65px 55px 65px 67px;
  grid-auto-rows: 12px;
  font-size: 11px;
  line-height: 12px;
  color: #c0c0c0;
`;
const ProfitTitle = styled.div`
  grid-column: 1 / -1;
  text-align: right;
  letter-spacing: -0.03px;
`;
const ProfitName = styled.div`
  letter-spacing: -0.17px;
`;
const ProfitCell = styled.div<{ $color?: string }>`
  text-align: right;
  color: ${(p) => p.$color ?? "inherit"};
`;
const ProfitCurrency = styled(ProfitCell)`
  grid-column: span 2;
  padding-right: 30px;
`;
const PriceScale = styled.div<{ $top: number }>`
  position: relative;
  display: flex;
  flex-direction: column;
  justify-content: space-between;
  height: 409px;
  padding-top: ${(p) => p.$top}px;
`;
const Price = styled.div`
  display: flex;
  align-items: center;
  gap: 3px;
  height: 13px;
  letter-spacing: -0.45px;
  &::before {
    content: "";
    width: 2px;
    height: 1px;
    background: #fff;
  }
`;
const CurrentPrice = styled.div<{ $top: number }>`
  position: absolute;
  top: ${(p) => p.$top}px;
  left: 1px;
  width: 41px;
  height: 11px;
  padding-left: 4px;
  line-height: 11px;
  letter-spacing: -0.45px;
  background: #fff;
  color: #000;
`;
const LevelScale = styled.div`
  position: relative;
`;
const Level = styled.div<{ $top: number }>`
  position: absolute;
  top: ${(p) => p.$top}px;
  left: 2px;
  line-height: 13px;
`;
const TimeScale = styled.div`
  grid-column: 1 / -1;
  display: grid;
  grid-template-columns: repeat(10, 64px);
  margin-top: -1px;
  line-height: 12px;
`;
const Time = styled.div`
  letter-spacing: -0.2px;
  &::before {
    content: "";
    display: block;
    width: 1px;
    height: 4px;
    margin-left: 1px;
    background: #fff;
  }
`;
